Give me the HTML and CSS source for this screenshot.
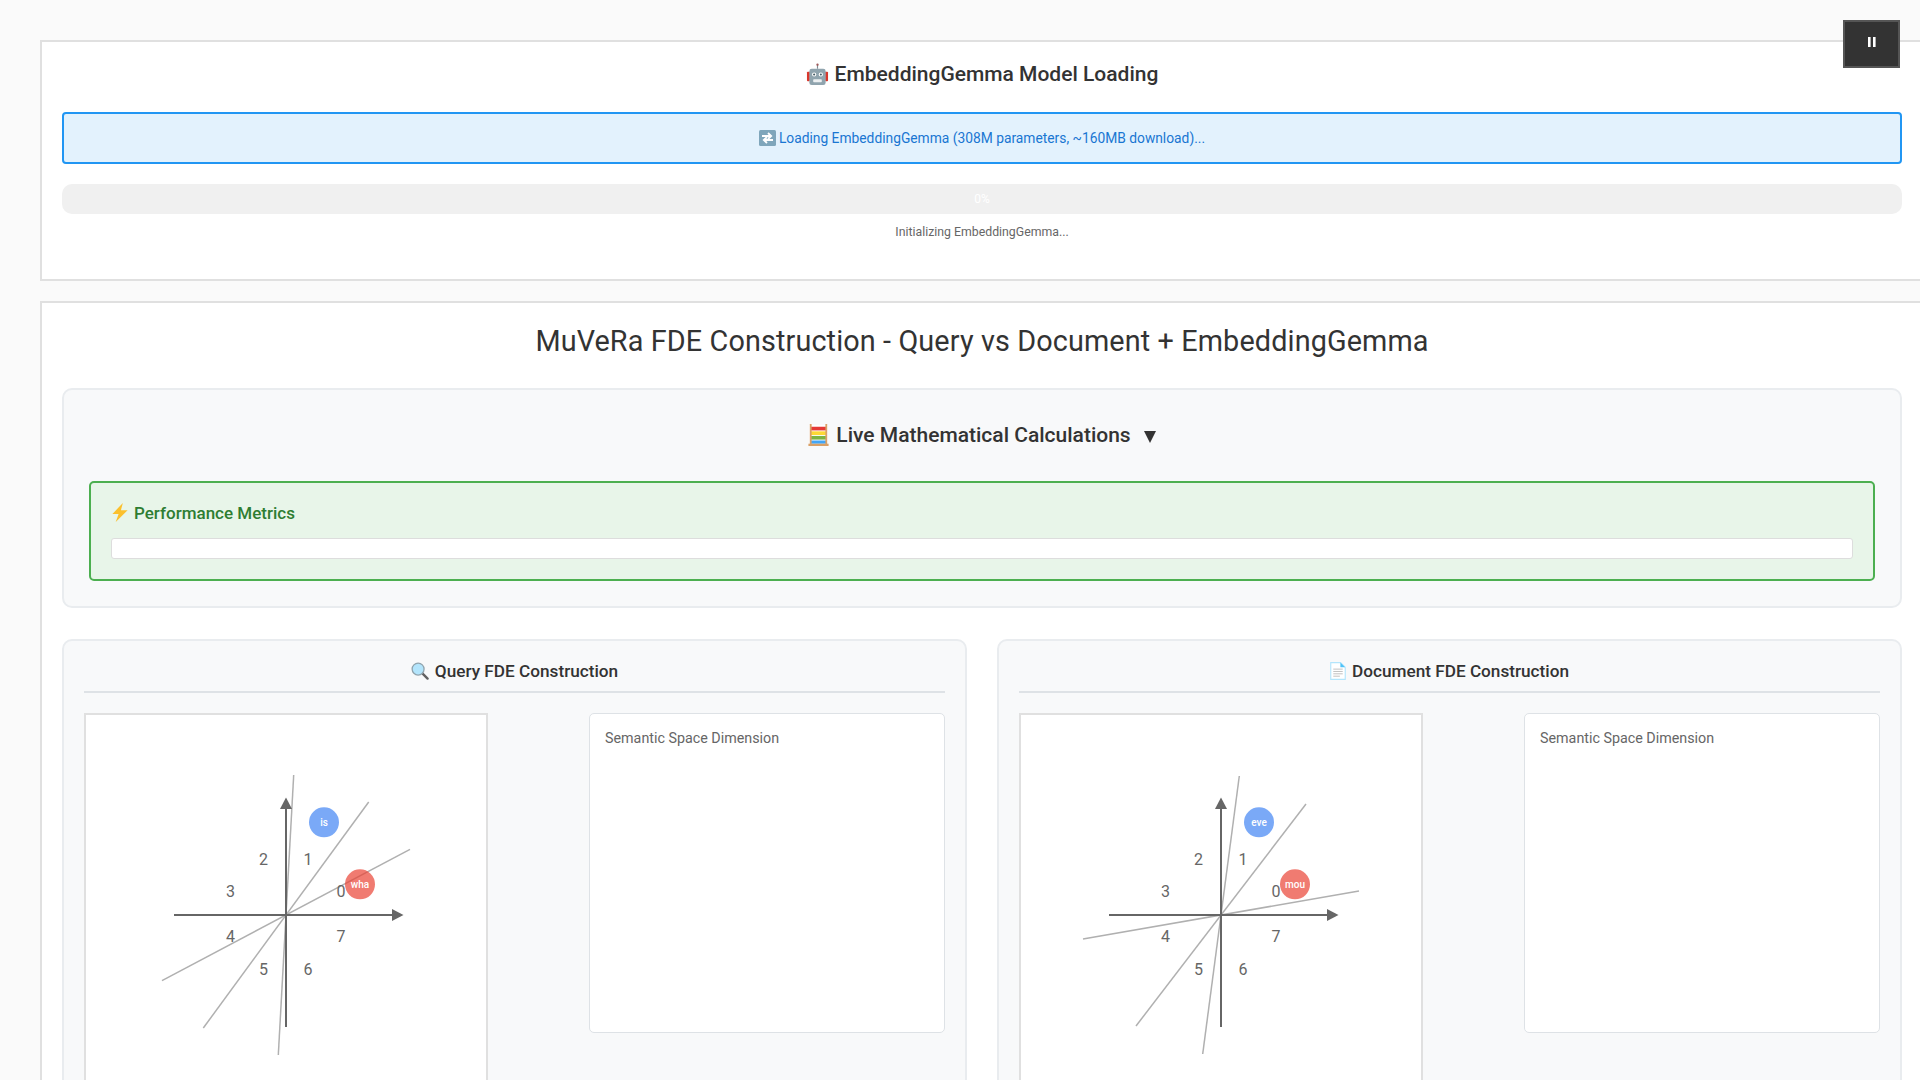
FILE: index.html
```html
<!DOCTYPE html>
<html lang="en">
<head>
    <meta charset="UTF-8">
    <meta name="viewport" content="width=device-width, initial-scale=1.0">
    <title>MuVeRa FDE Construction</title>
    <link rel="stylesheet" href="styles.css">
</head>
<body>
    <button class="pause-btn" aria-label="Pause">
        <svg width="8" height="10" viewBox="0 0 8 10"><rect x="0" y="0" width="2.6" height="10" fill="#fff"/><rect x="5" y="0" width="2.6" height="10" fill="#fff"/></svg>
    </button>

    <section class="panel loading-panel">
        <h2 class="loading-title">
            <svg width="23" height="23" viewBox="0 0 24 24">
                <rect x="11.4" y="1" width="1.2" height="5" fill="#7f8c94"/>
                <circle cx="12" cy="1.8" r="1.2" fill="#a05a5a"/>
                <rect x="1" y="9" width="3" height="10" rx="1" fill="#d8372c"/>
                <rect x="20" y="9" width="3" height="10" rx="1" fill="#d8372c"/>
                <rect x="3.500" y="6" width="17" height="17" rx="2.500" fill="#90a4ae"/>
                <circle cx="8.500" cy="12" r="2.200" fill="#fff"/>
                <circle cx="15.500" cy="12" r="2.200" fill="#fff"/>
                <circle cx="8.500" cy="12" r="1.100" fill="#455a64"/>
                <circle cx="15.500" cy="12" r="1.100" fill="#455a64"/>
                <rect x="7.500" y="17" width="9" height="3" rx=".8" fill="#eceff1"/>
            </svg>
            <span>EmbeddingGemma Model Loading</span>
        </h2>
        <div class="status-box">
            <svg width="17" height="16" viewBox="0 0 17 16">
                <rect width="17" height="16" rx="1.500" fill="#7fa6bb"/>
                <path d="M3 6h8M9 3l3.200 3L9 9" fill="none" stroke="#fff" stroke-width="1.800"/>
                <path d="M14 10H6M8 7l-3.200 3L8 13" fill="none" stroke="#fff" stroke-width="1.800"/>
            </svg>
            <span>Loading EmbeddingGemma (308M parameters, ~160MB download)...</span>
        </div>
        <div class="progress-track"><span class="progress-label">0%</span></div>
        <p class="progress-note">Initializing EmbeddingGemma...</p>
    </section>

    <section class="panel main-panel">
        <h1 class="main-title">MuVeRa FDE Construction - Query vs Document + EmbeddingGemma</h1>

        <div class="calc-card">
            <h3 class="calc-title">
                <svg width="21" height="22" viewBox="0 0 22 24">
                    <rect x="1" y="1" width="20" height="22" fill="#fff"/>
                    <rect x="2" y="3" width="18" height="4" fill="#e53935"/>
                    <rect x="2" y="8" width="18" height="4" fill="#fdd835"/>
                    <rect x="2" y="13" width="18" height="4" fill="#7cb342"/>
                    <rect x="2" y="18" width="18" height="3.500" fill="#42a5f5"/>
                    <rect x="1.500" y="0" width="2" height="24" fill="#d9a066"/>
                    <rect x="18.500" y="0" width="2" height="24" fill="#d9a066"/>
                    <rect x="0" y="21.500" width="22" height="2.500" fill="#d9a066"/>
                </svg>
                <span>Live Mathematical Calculations</span>
                <span class="caret"></span>
            </h3>
            <div class="metrics-box">
                <h4 class="metrics-title">
                    <svg width="18" height="19" viewBox="0 0 18 20"><path d="M12 0 1 11.500h6.500L4.500 20 17 7.500h-7z" fill="#fbc02d"/></svg>
                    <span>Performance Metrics</span>
                </h4>
                <div class="metrics-output"></div>
            </div>
        </div>

        <div class="fde-grid">
            <div class="fde-card">
                <h3 class="fde-title">
                    <svg width="18" height="18" viewBox="0 0 19 19">
                        <path d="M12 12l5.500 5.500" stroke="#616161" stroke-width="2.500" stroke-linecap="round"/>
                        <circle cx="7.500" cy="7.500" r="6.300" fill="#b3e5fc" stroke="#90a4ae" stroke-width="1.400"/>
                    </svg>
                    <span>Query FDE Construction</span>
                </h3>
                <div class="fde-row">
                    <div class="canvas-box">
                        <svg class="space-plot" width="400" height="400" viewBox="0 0 400 400">
                            <line class="hyper" x1="207.700" y1="60" x2="192.300" y2="340"/>
                            <line class="hyper" x1="282.700" y1="87" x2="117.300" y2="313"/>
                            <line class="hyper" x1="324" y1="134.300" x2="76" y2="265.700"/>
                            <line class="axis" x1="88" y1="200" x2="308" y2="200"/>
                            <line class="axis" x1="200" y1="312" x2="200" y2="92"/>
                            <polygon class="arrow" points="317.500,200 306,194 306,206"/>
                            <polygon class="arrow" points="200,82.500 194,94 206,94"/>
                            <g class="region">
                                <text x="255" y="176">0</text><text x="222" y="144">1</text>
                                <text x="177.500" y="144">2</text><text x="144.500" y="176">3</text>
                                <text x="144.500" y="221.500">4</text><text x="177.500" y="254">5</text>
                                <text x="222" y="254">6</text><text x="255" y="221.500">7</text>
                            </g>
                            <circle class="dot-blue" cx="238" cy="107.300" r="15"/>
                            <text class="dot-label" x="238" y="107.300">is</text>
                            <circle class="dot-red" cx="274" cy="169.300" r="15"/>
                            <text class="dot-label" x="274" y="169.300">wha</text>
                        </svg>
                    </div>
                    <div class="dim-box">Semantic Space Dimension</div>
                </div>
            </div>

            <div class="fde-card">
                <h3 class="fde-title">
                    <svg width="16" height="18" viewBox="0 0 17 19">
                        <path d="M.8.600h10.400l5 5v12.800H.8z" fill="#fff" stroke="#b3e5fc" stroke-width="1.200"/>
                        <path d="M11 .6v5h5z" fill="#4fc3f7"/>
                        <path d="M3.500 7.500h10M3.500 10h10M3.500 12.500h10M3.500 15h7" stroke="#bdbdbd" stroke-width="1"/>
                    </svg>
                    <span>Document FDE Construction</span>
                </h3>
                <div class="fde-row">
                    <div class="canvas-box">
                        <svg class="space-plot" width="400" height="400" viewBox="0 0 400 400">
                            <line class="hyper" x1="218.300" y1="61" x2="181.700" y2="339"/>
                            <line class="hyper" x1="285" y1="89" x2="115" y2="311"/>
                            <line class="hyper" x1="338" y1="176" x2="62" y2="224"/>
                            <line class="axis" x1="88" y1="200" x2="308" y2="200"/>
                            <line class="axis" x1="200" y1="312" x2="200" y2="92"/>
                            <polygon class="arrow" points="317.500,200 306,194 306,206"/>
                            <polygon class="arrow" points="200,82.500 194,94 206,94"/>
                            <g class="region">
                                <text x="255" y="176">0</text><text x="222" y="144">1</text>
                                <text x="177.500" y="144">2</text><text x="144.500" y="176">3</text>
                                <text x="144.500" y="221.500">4</text><text x="177.500" y="254">5</text>
                                <text x="222" y="254">6</text><text x="255" y="221.500">7</text>
                            </g>
                            <circle class="dot-blue" cx="238" cy="107.300" r="15"/>
                            <text class="dot-label" x="238" y="107.300">eve</text>
                            <circle class="dot-red" cx="274" cy="169.300" r="15"/>
                            <text class="dot-label" x="274" y="169.300">mou</text>
                        </svg>
                    </div>
                    <div class="dim-box">Semantic Space Dimension</div>
                </div>
            </div>
        </div>
    </section>
</body>
</html>
```

FILE: styles.css
```css
* {
    box-sizing: border-box;
    margin: 0;
    padding: 0;
}
html, body {
    overflow-x: hidden;
}
body {
    background-color: #fafafa;
    color: #333;
    font-family: "Roboto", "Inter", sans-serif;
    padding: 40px 0 40px 40px;
    width: 1964px;
}

.pause-btn {
    position: fixed;
    top: 20px;
    right: 20px;
    width: 57px;
    height: 48px;
    background-color: #333;
    border: 2px solid #555;
    display: flex;
    justify-content: center;
    padding-top: 15px;
    z-index: 10;
}

.panel {
    background-color: #fff;
    border: 2px solid #e0e0e0;
    padding: 20px;
    width: 1884px;
}
.loading-panel {
    height: 241px;
    margin-bottom: 20px;
}
.loading-title {
    display: flex;
    justify-content: center;
    align-items: center;
    gap: 6px;
    font-size: 21px;
    font-weight: 500;
    line-height: 24px;
    margin-bottom: 26px;
}
.status-box {
    display: flex;
    justify-content: center;
    align-items: center;
    gap: 3px;
    background-color: #e3f2fd;
    border: 2px solid #2196f3;
    border-radius: 4px;
    color: #1976d2;
    font-size: 13.800px;
    line-height: 18px;
    padding: 15px;
    margin-bottom: 20px;
}
.progress-track {
    background-color: #f0f0f0;
    border-radius: 10px;
    height: 30px;
    display: flex;
    align-items: center;
    justify-content: center;
}
.progress-label {
    color: #fff;
    font-size: 12px;
}
.progress-note {
    color: #666;
    font-size: 12.300px;
    line-height: 16px;
    margin-top: 10px;
    text-align: center;
}

.main-title {
    font-size: 28.800px;
    font-weight: 400;
    letter-spacing: 0.12px;
    line-height: 36px;
    text-align: center;
    margin-bottom: 29px;
}
.calc-card {
    background-color: #f8f9fa;
    border: 2px solid #e9ecef;
    border-radius: 10px;
    padding: 25px;
    margin-bottom: 31px;
}
.calc-title {
    display: flex;
    justify-content: center;
    align-items: center;
    gap: 7px;
    font-size: 21px;
    font-weight: 500;
    line-height: 24px;
    margin: 8px 0 34px;
}
.caret {
    width: 0;
    height: 0;
    margin-left: 6px;
    margin-top: 3px;
    border-left: 6px solid transparent;
    border-right: 6px solid transparent;
    border-top: 12px solid #333;
}
.metrics-box {
    background-color: #e8f5e9;
    border: 2px solid #4caf50;
    border-radius: 5px;
    padding: 20px;
}
.metrics-title {
    display: flex;
    align-items: center;
    gap: 5px;
    color: #2e7d32;
    font-size: 17px;
    font-weight: 500;
    line-height: 18px;
    margin-bottom: 16px;
}
.metrics-output {
    background-color: #fff;
    border: 1px solid #ddd;
    border-radius: 3px;
    height: 21px;
}

.fde-grid {
    display: grid;
    grid-template-columns: 1fr 1fr;
    gap: 30px;
}
.fde-card {
    background-color: #f8f9fa;
    border: 2px solid #e9ecef;
    border-radius: 10px;
    padding: 20px;
}
.fde-title {
    display: flex;
    justify-content: center;
    align-items: center;
    gap: 6px;
    border-bottom: 2px solid #dee2e6;
    font-size: 17.200px;
    font-weight: 500;
    line-height: 20px;
    padding-bottom: 10px;
    margin-bottom: 20px;
}
.fde-row {
    display: flex;
    justify-content: space-between;
    align-items: flex-start;
}
.canvas-box {
    background-color: #fff;
    border: 2px solid #e0e0e0;
    width: 404px;
    height: 404px;
}
.space-plot {
    display: block;
}
.dim-box {
    background-color: #fff;
    border: 1px solid #dee2e6;
    border-radius: 5px;
    color: #666;
    font-size: 14.300px;
    line-height: 19px;
    padding: 15px;
    width: 356px;
    height: 320px;
}

.hyper {
    stroke: #b0b0b0;
    stroke-width: 1.5;
}
.axis {
    stroke: #666;
    stroke-width: 2;
}
.arrow {
    fill: #666;
}
.region text {
    fill: #666;
    font-size: 16px;
    text-anchor: middle;
    dominant-baseline: central;
}
.dot-blue {
    fill: #4285f4;
    fill-opacity: 0.7;
}
.dot-red {
    fill: #ea4335;
    fill-opacity: 0.7;
}
.dot-label {
    fill: #fff;
    font-size: 10px;
    font-weight: 500;
    text-anchor: middle;
    dominant-baseline: central;
}
```
